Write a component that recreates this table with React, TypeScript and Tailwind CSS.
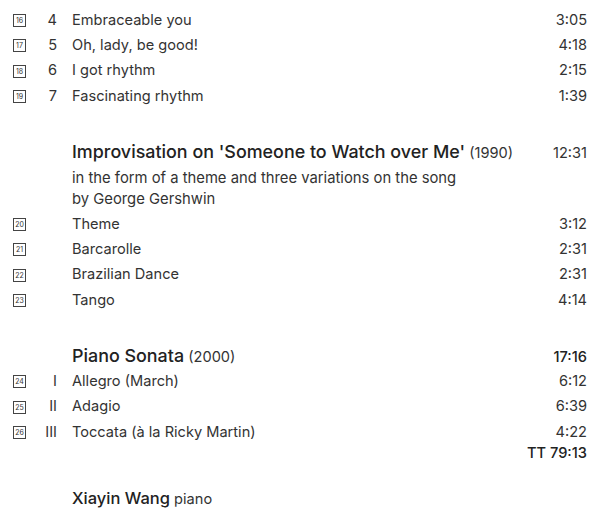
const font = { fontFamily: "Inter, Roboto, 'Liberation Sans', sans-serif" };

type Track = { cd: number; num?: string; title: string; time: string };

const gershwin: Track[] = [
  { cd: 16, num: "4", title: "Embraceable you", time: "3:05" },
  { cd: 17, num: "5", title: "Oh, lady, be good!", time: "4:18" },
  { cd: 18, num: "6", title: "I got rhythm", time: "2:15" },
  { cd: 19, num: "7", title: "Fascinating rhythm", time: "1:39" },
];

const improvisation: Track[] = [
  { cd: 20, title: "Theme", time: "3:12" },
  { cd: 21, title: "Barcarolle", time: "2:31" },
  { cd: 22, title: "Brazilian Dance", time: "2:31" },
  { cd: 23, title: "Tango", time: "4:14" },
];

const sonata: Track[] = [
  { cd: 24, num: "I", title: "Allegro (March)", time: "6:12" },
  { cd: 25, num: "II", title: "Adagio", time: "6:39" },
  { cd: 26, num: "III", title: "Toccata (à la Ricky Martin)", time: "4:22" },
];

function TrackRow({ t }: { t: Track }) {
  return (
    <div className="flex items-center h-[25.3px] text-[14.6px] text-[#333]">
      <div className="w-[13px] h-[13px] border border-[#444] flex items-center justify-center text-[7px] leading-none text-[#333] shrink-0">
        {t.cd}
      </div>
      <div className="w-[31px] text-right shrink-0">{t.num}</div>
      <div className="flex-1 pl-[15px]">{t.title}</div>
      <div className="text-right">{t.time}</div>
    </div>
  );
}

export default function App() {
  return (
    <div className="w-[600px] h-[518px] bg-white overflow-hidden pl-[13px] pr-[13px] pt-[8px]" style={font}>
      {gershwin.map((t) => (
        <TrackRow key={t.cd} t={t} />
      ))}

      <div className="mt-[30px] flex items-baseline text-[#222]">
        <div className="pl-[59px] flex-1">
          <span className="text-[17.9px] font-medium">Improvisation on 'Someone to Watch over Me'</span>
          <span className="text-[14.6px] text-[#333]"> (1990)</span>
        </div>
        <div className="text-[14.6px] text-[#333]">12:31</div>
      </div>
      <div className="pl-[59px] text-[14.8px] leading-[21px] text-[#333] mt-[2px] mb-[2px]">
        in the form of a theme and three variations on the song
        <br />
        by George Gershwin
      </div>
      {improvisation.map((t) => (
        <TrackRow key={t.cd} t={t} />
      ))}

      <div className="mt-[30px] h-[26px] flex items-baseline text-[#222]">
        <div className="pl-[59px] flex-1">
          <span className="text-[17.9px] font-medium">Piano Sonata</span>
          <span className="text-[14.6px] text-[#333]"> (2000)</span>
        </div>
        <div className="text-[14.6px] font-medium">17:16</div>
      </div>
      {sonata.map((t) => (
        <TrackRow key={t.cd} t={t} />
      ))}
      <div className="text-right text-[14.6px] font-medium text-[#222] leading-[16px]">TT 79:13</div>

      <div className="pl-[59px] mt-[25px] text-[#222]">
        <span className="text-[16.5px] font-medium">Xiayin Wang</span>
        <span className="text-[14.6px] text-[#333]"> piano</span>
      </div>
    </div>
  );
}
